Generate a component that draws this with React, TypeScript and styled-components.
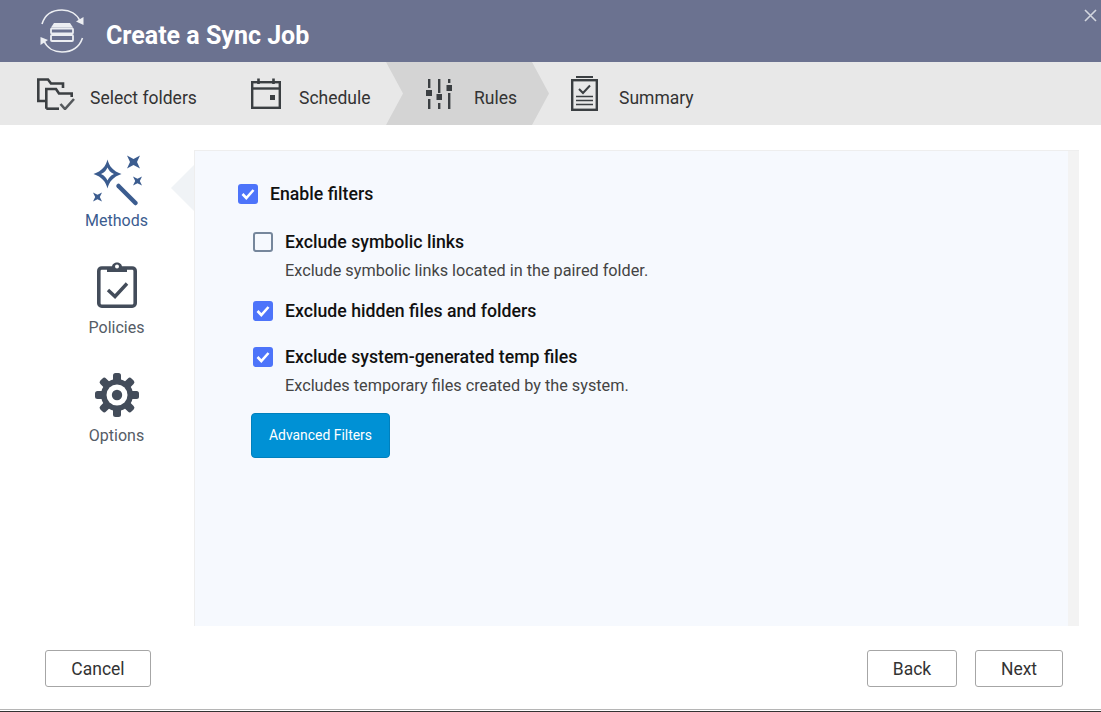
import React from 'react';
import styled, { createGlobalStyle } from 'styled-components';

const GlobalStyle = createGlobalStyle`
  html, body {
    margin: 0;
    padding: 0;
    background: #fff;
    font-family: Roboto, "Liberation Sans", sans-serif;
  }
  * { box-sizing: border-box; }
`;

const STEP_COLOR = '#3b3f42';
const NAV_COLOR = '#434c5a';
const ACTIVE_COLOR = '#3b5c8f';

function SyncLogo() {
  return (
    <svg width="46" height="46" viewBox="0 0 46 46" fill="none" stroke="#eceef2">
      <path d="M3 16 C6 6 14 2 23 2 C31 2 38 6 41 13" strokeWidth="1.6" />
      <path d="M43.500 30 C40 40 32 44 23 44 C15 44 8 40 5 33" strokeWidth="1.6" />
      <path d="M37 13.500 L44.500 17 L44.500 9 Z" fill="#eceef2" stroke="none" />
      <path d="M9 32 L1.500 29 L1.500 37 Z" fill="#eceef2" stroke="none" />
      <path d="M12 19.500 L15 15 H31 L34 19.500 Z" fill="#eceef2" stroke="none" />
      <rect x="12" y="20.500" width="22" height="5" rx="1" fill="#6b7290" strokeWidth="1.800" />
      <rect x="12" y="27" width="22" height="6" rx="1" fill="#6b7290" strokeWidth="1.800" />
    </svg>
  );
}

function FoldersIcon() {
  return (
    <svg width="39" height="33" viewBox="0 0 39 33" fill="none" stroke={STEP_COLOR} strokeWidth="2.600">
      <path d="M8 24 H1.300 V2.500 H11 L14 6.500 H26 V11" />
      <path d="M9.300 31.700 V12 H19 L22 16.500 H34.700 V20" />
      <path d="M9.300 31.700 H22" />
      <path d="M23.500 27 L28 32 L37 22" stroke="#55595c" />
    </svg>
  );
}

function CalendarIcon() {
  return (
    <svg width="30" height="31" viewBox="0 0 30 31" fill="none" stroke={STEP_COLOR}>
      <rect x="1.200" y="4.200" width="27.600" height="25.600" strokeWidth="2.400" />
      <path d="M1 10.500 H29" strokeWidth="2.400" />
      <path d="M7.500 0.500 V6 M22.500 0.500 V6" strokeWidth="2.600" />
      <rect x="19" y="17" width="5" height="5" fill={STEP_COLOR} stroke="none" />
    </svg>
  );
}

function SlidersIcon() {
  return (
    <svg width="27" height="30" viewBox="0 0 27 30" fill={STEP_COLOR}>
      <rect x="2" y="0" width="2.400" height="9" />
      <rect x="0" y="11" width="6" height="6" />
      <rect x="2" y="20" width="2.400" height="10" />
      <rect x="12" y="0" width="2.400" height="14" />
      <rect x="10.500" y="15" width="5.500" height="6" />
      <rect x="12" y="24" width="2.400" height="6" />
      <rect x="22" y="0" width="2.400" height="4" />
      <rect x="20.500" y="6" width="5.500" height="6" />
      <rect x="22" y="14" width="2.400" height="16" />
    </svg>
  );
}

function SummaryIcon() {
  return (
    <svg width="27" height="35" viewBox="0 0 27 35" fill="none" stroke={STEP_COLOR}>
      <path d="M5 1 H22" strokeWidth="2" />
      <rect x="1.200" y="4.200" width="24.600" height="29.600" strokeWidth="2.400" />
      <path d="M8 13 L12 17 L19 9.500" strokeWidth="2" />
      <path d="M5 20.500 H22 M5 24.500 H22 M5 28.500 H22" strokeWidth="1.500" />
    </svg>
  );
}

function WandIcon() {
  return (
    <svg width="50" height="52" viewBox="0 0 50 52" fill={ACTIVE_COLOR}>
      <path
        fillRule="evenodd"
        d="M15.500 4.500 C17 11 21 16 29.500 19 C21 22 17 27 15.500 33.500 C14 27 10 22 1.500 19 C10 16 14 11 15.500 4.500 Z M15.500 12.500 C14.500 15 12.500 17.500 9 19 C12.500 20.500 14.500 23 15.500 25.500 C16.500 23 18.500 20.500 22 19 C18.500 17.500 16.500 15 15.500 12.500 Z"
      />
      <path d="M35 0.500 L41.500 4 L48 0.500 L45 7 L48 13.500 L41.500 10 L35 13.500 L38 7 Z" />
      <path d="M41 21.500 L45.500 23.800 L50 21.500 L47.800 26 L50 30.500 L45.500 28.200 L41 30.500 L43.200 26 Z" />
      <path d="M1 37.500 L5.500 39.800 L10 37.500 L7.800 42 L10 46.500 L5.500 44.200 L1 46.500 L3.200 42 Z" />
      <path d="M26.500 31 L43.500 48" fill="none" stroke={ACTIVE_COLOR} strokeWidth="4.500" strokeLinecap="round" />
    </svg>
  );
}

function ClipboardIcon() {
  return (
    <svg width="40" height="46" viewBox="0 0 40 46" fill="none" stroke={NAV_COLOR}>
      <rect x="1.800" y="6" width="36.400" height="38.200" rx="3" strokeWidth="3.600" />
      <path d="M10 5 H15 C15 -1 25 -1 25 5 H30 V10 H10 Z" fill={NAV_COLOR} stroke="none" />
      <circle cx="20" cy="4.500" r="2" fill="#fff" stroke="none" />
      <path d="M11 28 L18 34.500 L30 21.500" strokeWidth="3.400" />
    </svg>
  );
}

function GearIcon() {
  const teeth = [0, 45, 90, 135, 180, 225, 270, 315];
  return (
    <svg width="44" height="44" viewBox="0 0 44 44" fill={NAV_COLOR}>
      {teeth.map((deg) => (
        <rect key={deg} x="18" y="0" width="8" height="12" rx="2.500" transform={`rotate(${deg} 22 22)`} />
      ))}
      <circle cx="22" cy="22" r="16" />
      <circle cx="22" cy="22" r="10.500" fill="#fff" />
      <circle cx="22" cy="22" r="5.200" />
    </svg>
  );
}

function CheckMark() {
  return (
    <svg width="14" height="12" viewBox="0 0 14 12" fill="none" stroke="#fff" strokeWidth="2.600">
      <path d="M1.500 6 L5.300 10 L12.500 2" />
    </svg>
  );
}

export default function App() {
  return (
    <>
      <GlobalStyle />
      <Dialog>
        <Header>
          <LogoSlot><SyncLogo /></LogoSlot>
          <Title>Create a Sync Job</Title>
          <CloseButton>
            <svg width="13" height="13" viewBox="0 0 13 13" stroke="#d3d6df" strokeWidth="1.600">
              <path d="M1 1 L12 12 M12 1 L1 12" />
            </svg>
          </CloseButton>
        </Header>

        <Steps>
          <Step $width={214} $pad={37}>
            <StepIcon $width={53}><FoldersIcon /></StepIcon>
            <StepLabel>Select folders</StepLabel>
          </Step>
          <Step $width={172} $pad={37}>
            <StepIcon $width={48}><CalendarIcon /></StepIcon>
            <StepLabel>Schedule</StepLabel>
          </Step>
          <ActiveStep $width={163} $pad={40}>
            <StepIcon $width={48}><SlidersIcon /></StepIcon>
            <StepLabel>Rules</StepLabel>
          </ActiveStep>
          <Step $width={200} $pad={22}>
            <StepIcon $width={48}><SummaryIcon /></StepIcon>
            <StepLabel>Summary</StepLabel>
          </Step>
        </Steps>

        <Body>
          <SideNav>
            <NavItem $active $height={107} $gap={4}>
              <WandIcon />
              <NavLabel>Methods</NavLabel>
            </NavItem>
            <NavItem $height={111} $gap={10}>
              <ClipboardIcon />
              <NavLabel>Policies</NavLabel>
            </NavItem>
            <NavItem $height={80} $gap={9}>
              <GearIcon />
              <NavLabel>Options</NavLabel>
            </NavItem>
          </SideNav>

          <Panel>
            <Pointer />
            <PanelContent>
              <MainOption>
                <CheckBox $checked><CheckMark /></CheckBox>
                <MainLabel>Enable filters</MainLabel>
              </MainOption>

              <OptionList>
                <SubOption $height={69}>
                  <CheckBox />
                  <OptionText>
                    <OptionLabel>Exclude symbolic links</OptionLabel>
                    <OptionHint>Exclude symbolic links located in the paired folder.</OptionHint>
                  </OptionText>
                </SubOption>
                <SubOption $height={46}>
                  <CheckBox $checked><CheckMark /></CheckBox>
                  <OptionText>
                    <OptionLabel>Exclude hidden files and folders</OptionLabel>
                  </OptionText>
                </SubOption>
                <SubOption $height={66}>
                  <CheckBox $checked><CheckMark /></CheckBox>
                  <OptionText>
                    <OptionLabel>Exclude system-generated temp files</OptionLabel>
                    <OptionHint>Excludes temporary files created by the system.</OptionHint>
                  </OptionText>
                </SubOption>
              </OptionList>

              <PrimaryButton>Advanced Filters</PrimaryButton>
            </PanelContent>
            <ScrollTrack />
          </Panel>
        </Body>

        <Footer>
          <FooterButton $width={106}>Cancel</FooterButton>
          <FooterRight>
            <FooterButton $width={90}>Back</FooterButton>
            <FooterButton $width={88}>Next</FooterButton>
          </FooterRight>
        </Footer>
        <BottomEdge />
      </Dialog>
    </>
  );
}

const Dialog = styled.div`
  width: 1101px;
  height: 712px;
  display: flex;
  flex-direction: column;
  overflow: hidden;
  background: #fff;
`;

const Header = styled.header`
  position: relative;
  height: 62px;
  flex: none;
  display: flex;
  align-items: center;
  padding-left: 39px;
  background: #6b7290;
`;

const LogoSlot = styled.div`
  width: 67px;
  height: 46px;
`;

const Title = styled.h1`
  margin: 0;
  padding-top: 8px;
  font-size: 25px;
  font-weight: 700;
  color: #fff;
`;

const CloseButton = styled.div`
  position: absolute;
  top: 9px;
  right: 4px;
  line-height: 0;
`;

const Steps = styled.nav`
  height: 63px;
  flex: none;
  display: flex;
  background: #e8e8e8;
`;

const Step = styled.div<{ $width: number; $pad: number }>`
  width: ${({ $width }) => $width}px;
  flex: none;
  display: flex;
  align-items: center;
  padding-left: ${({ $pad }) => $pad}px;
`;

const ActiveStep = styled(Step)`
  background: #d4d4d4;
  clip-path: polygon(0 0, 146px 0, 100% 50%, 146px 100%, 0 100%, 17px 50%);
`;

const StepIcon = styled.div<{ $width: number }>`
  width: ${({ $width }) => $width}px;
  flex: none;
  display: flex;
  align-items: center;
`;

const StepLabel = styled.span`
  padding-top: 8px;
  font-size: 17.5px;
  color: #333;
  white-space: nowrap;
`;

const Body = styled.main`
  flex: none;
  height: 501px;
  display: flex;
  padding: 25px 22px 0 0;
`;

const SideNav = styled.aside`
  width: 194px;
  flex: none;
  padding: 5px 0 0 39px;
`;

const NavItem = styled.div<{ $active?: boolean; $height: number; $gap: number }>`
  width: 155px;
  height: ${({ $height }) => $height}px;
  display: flex;
  flex-direction: column;
  align-items: center;
  gap: ${({ $gap }) => $gap}px;
  color: ${({ $active }) => ($active ? ACTIVE_COLOR : '#555c66')};
`;

const NavLabel = styled.span`
  font-size: 16px;
  line-height: 20px;
`;

const Panel = styled.section`
  position: relative;
  flex: 1;
  display: flex;
  background: #f6f9fe;
  border-top: 1px solid #eeeeee;
  border-left: 1px solid #eeeeee;
`;

const Pointer = styled.div`
  position: absolute;
  top: 14px;
  left: -24px;
  width: 0;
  height: 0;
  border-style: solid;
  border-width: 23px 23px 23px 0;
  border-color: transparent #f0f3f6 transparent transparent;
`;

const PanelContent = styled.div`
  flex: 1;
  padding: 33px 0 0 43px;
`;

const ScrollTrack = styled.div`
  width: 11px;
  flex: none;
  background: #f3f3f3;
`;

const MainOption = styled.div`
  height: 20px;
  display: flex;
  align-items: center;
  gap: 12px;
`;

const CheckBox = styled.span<{ $checked?: boolean }>`
  width: 20px;
  height: 20px;
  flex: none;
  display: flex;
  align-items: center;
  justify-content: center;
  border-radius: 3px;
  background: ${({ $checked }) => ($checked ? '#4d74fa' : 'transparent')};
  border: ${({ $checked }) => ($checked ? 'none' : '2px solid #76879c')};
`;

const MainLabel = styled.span`
  font-size: 17.7px;
  line-height: 20px;
  font-weight: 500;
  color: #111;
`;

const OptionList = styled.div`
  margin: 28px 0 0 15px;
  display: flex;
  flex-direction: column;
`;

const SubOption = styled.div<{ $height: number }>`
  height: ${({ $height }) => $height}px;
  display: flex;
  gap: 12px;
`;

const OptionText = styled.div`
  display: flex;
  flex-direction: column;
`;

const OptionLabel = styled.span`
  font-size: 17.7px;
  line-height: 20px;
  font-weight: 500;
  color: #111;
`;

const OptionHint = styled.span`
  margin-top: 9px;
  font-size: 16.25px;
  line-height: 19px;
  color: #444;
`;

const PrimaryButton = styled.button`
  display: block;
  width: 139px;
  height: 45px;
  margin: 0 0 0 13px;
  padding: 0 0 2px;
  background: #0091d5;
  border: 1px solid #0080bd;
  border-radius: 4px;
  color: #fff;
  font-family: inherit;
  font-size: 13.9px;
  font-weight: 400;
`;

const Footer = styled.footer`
  flex: 1;
  display: flex;
  justify-content: space-between;
  align-items: flex-start;
  padding: 24px 38px 0 45px;
`;

const FooterRight = styled.div`
  display: flex;
  gap: 18px;
`;

const FooterButton = styled.button<{ $width: number }>`
  width: ${({ $width }) => $width}px;
  height: 37px;
  padding: 0;
  background: #fff;
  border: 1px solid #a6a6a6;
  border-radius: 3px;
  color: #333;
  font-family: inherit;
  font-size: 17.5px;
`;

const BottomEdge = styled.div`
  height: 3px;
  flex: none;
  border-top: 1px solid #b5b5b5;
  border-bottom: 1px solid #333;
  background: #fff;
`;
